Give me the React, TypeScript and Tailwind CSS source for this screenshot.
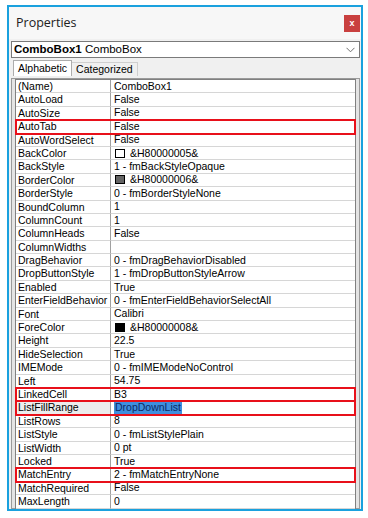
import React from 'react';

type Row = {
  name: string;
  value: string;
  swatch?: string;
  boxed?: boolean;
  selected?: boolean;
};

const rows: Row[] = [
  { name: '(Name)', value: 'ComboBox1' },
  { name: 'AutoLoad', value: 'False' },
  { name: 'AutoSize', value: 'False' },
  { name: 'AutoTab', value: 'False', boxed: true },
  { name: 'AutoWordSelect', value: 'False' },
  { name: 'BackColor', value: '&H80000005&', swatch: '#ffffff' },
  { name: 'BackStyle', value: '1 - fmBackStyleOpaque' },
  { name: 'BorderColor', value: '&H80000006&', swatch: '#646464' },
  { name: 'BorderStyle', value: '0 - fmBorderStyleNone' },
  { name: 'BoundColumn', value: '1' },
  { name: 'ColumnCount', value: '1' },
  { name: 'ColumnHeads', value: 'False' },
  { name: 'ColumnWidths', value: '' },
  { name: 'DragBehavior', value: '0 - fmDragBehaviorDisabled' },
  { name: 'DropButtonStyle', value: '1 - fmDropButtonStyleArrow' },
  { name: 'Enabled', value: 'True' },
  { name: 'EnterFieldBehavior', value: '0 - fmEnterFieldBehaviorSelectAll' },
  { name: 'Font', value: 'Calibri' },
  { name: 'ForeColor', value: '&H80000008&', swatch: '#000000' },
  { name: 'Height', value: '22.5' },
  { name: 'HideSelection', value: 'True' },
  { name: 'IMEMode', value: '0 - fmIMEModeNoControl' },
  { name: 'Left', value: '54.75' },
  { name: 'LinkedCell', value: 'B3', boxed: true },
  { name: 'ListFillRange', value: 'DropDownList', boxed: true, selected: true },
  { name: 'ListRows', value: '8' },
  { name: 'ListStyle', value: '0 - fmListStylePlain' },
  { name: 'ListWidth', value: '0 pt' },
  { name: 'Locked', value: 'True' },
  { name: 'MatchEntry', value: '2 - fmMatchEntryNone', boxed: true },
  { name: 'MatchRequired', value: 'False' },
  { name: 'MaxLength', value: '0' },
];

function PropRow({ row }: { row: Row }) {
  return (
    <div
      className={
        'flex h-[13.4px] leading-[13px] ' +
        (row.boxed ? 'relative z-10 outline-2 outline-[#e8101a] -outline-offset-1' : '')
      }
    >
      <div
        className={
          'w-[95px] shrink-0 border-r border-b border-[#a0a0a0] border-b-[#d6d6d6] pl-[2px] overflow-hidden whitespace-nowrap ' +
          (row.selected ? 'bg-[#ececec]' : 'bg-white')
        }
      >
        {row.name}
      </div>
      <div className="flex-1 flex items-center border-b border-[#d6d6d6] bg-white pl-[3px] overflow-hidden whitespace-nowrap">
        {row.swatch && (
          <span
            className="inline-block w-[10px] h-[9px] border border-black mr-[5px] ml-[1px]"
            style={{ backgroundColor: row.swatch }}
          />
        )}
        {row.selected ? (
          <span className="bg-[#3f8fde] text-[#0b2a66] px-[1px]">{row.value}</span>
        ) : (
          <span>{row.value}</span>
        )}
      </div>
    </div>
  );
}

export default function App() {
  return (
    <div className="w-[368px] h-[518px] bg-white pt-[5px] pl-[7px] font-['Liberation_Sans',Arial,sans-serif] text-[10.5px] text-black">
      <div className="w-[356px] h-[506px] border-2 border-[#1aa1de] bg-[#f0f0f0] flex flex-col">
        <div className="h-[32px] shrink-0 flex items-center justify-between pl-[7px] pr-[1px] bg-[#f7f7f7]">
          <span className="text-[12.5px] text-[#202020] font-['Open_Sans',sans-serif]">Properties</span>
          <div className="w-[16px] h-[17px] bg-[#c9403f] flex items-center justify-center text-white text-[9px] font-bold leading-none">
            x
          </div>
        </div>

        <div className="mt-[2px] ml-[2px] mr-[1px] h-[17px] shrink-0 border border-[#7a7a7a] bg-white flex items-center justify-between pl-[2px] pr-[4px]">
          <span className="text-[11.5px]">
            <span className="font-bold">ComboBox1</span> ComboBox
          </span>
          <svg width="9" height="6" viewBox="0 0 9 6" fill="none" stroke="#707070" strokeWidth="1">
            <path d="M0.5 0.8 L4.5 4.8 L8.5 0.8" />
          </svg>
        </div>

        <div className="mt-[2px] ml-[4px] h-[16px] shrink-0 flex items-end whitespace-nowrap">
          <div className="h-[16px] px-[4px] bg-white border border-b-0 border-[#adadad] leading-[14px]">
            Alphabetic
          </div>
          <div className="h-[14px] px-[4px] bg-[#f0f0f0] border border-b-0 border-l-0 border-[#cfcfcf] leading-[13px]">
            Categorized
          </div>
        </div>

        <div className="ml-[2px] mr-[1px] mt-[2px] flex-1 border border-[#9a9a9a] bg-[#e4e4e4] pl-[3px] pr-[3px] pb-[1px] min-h-0">
          <div className="border-l border-t border-r border-[#808080] bg-white">
            {rows.map((r) => (
              <PropRow key={r.name} row={r} />
            ))}
          </div>
        </div>
      </div>
    </div>
  );
}
